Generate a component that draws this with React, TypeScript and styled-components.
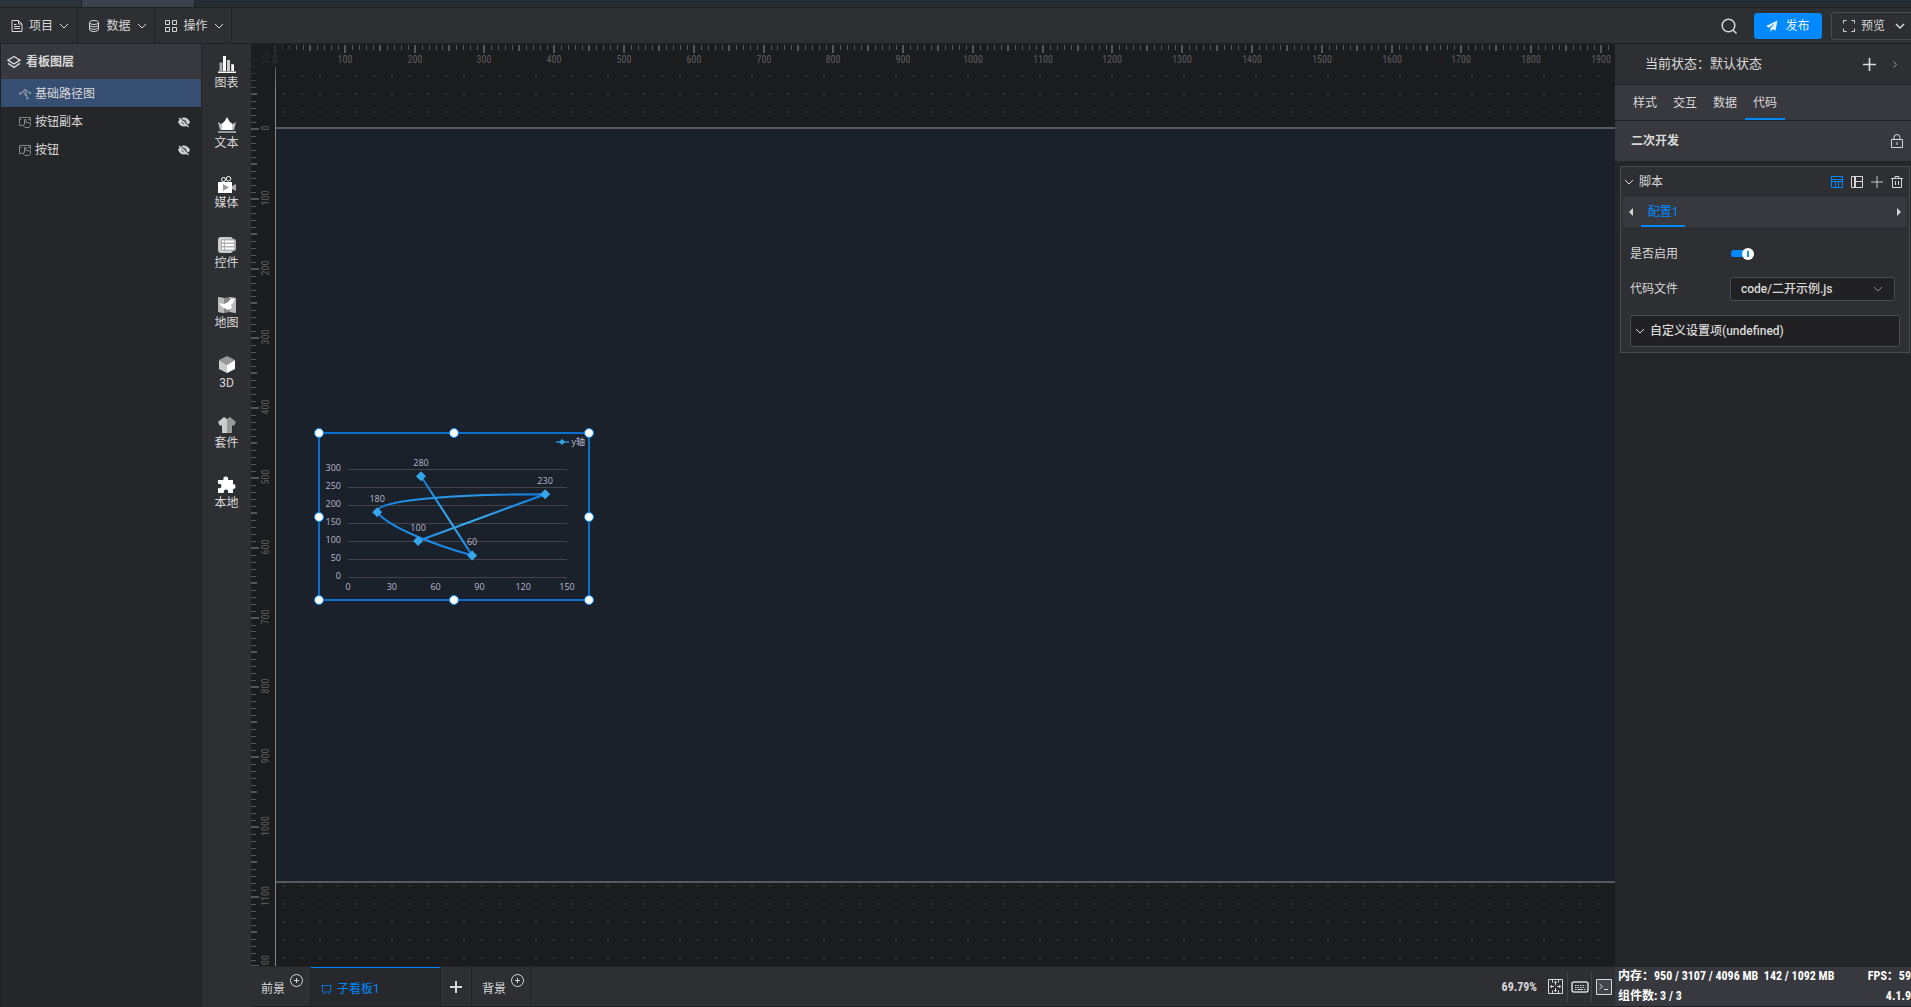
import React, { useState } from "react";
import styled, { createGlobalStyle, css } from "styled-components";

const c = {
  bar: "#2e2f33",
  raised: "#38393e",
  panel: "#252628",
  canvas: "#1b1c1d",
  board: "#1b212a",
  line: "#222326",
  outline: "#4a4b4f",
  text: "#d8d8d8",
  accent: "#0088ff",
};
const narrow = `"Roboto Condensed", "Liberation Sans Narrow", Roboto, "Noto Sans CJK SC", sans-serif`;

const GlobalStyle = createGlobalStyle`
  *, *::before, *::after { box-sizing: border-box; }
  body {
    margin: 0;
    background: ${c.panel};
    color: ${c.text};
    font: 12px/16px Roboto, "Noto Sans CJK SC", sans-serif;
    overflow: hidden;
  }
  button, select, input { font: inherit; color: inherit; margin: 0; }
  button { background: none; border: 0; padding: 0; cursor: pointer; }
  svg { display: block; flex: none; }
`;

/* ---------- layout ---------- */

const Page = styled.div`
  display: flex;
  flex-direction: column;
  height: 100vh;
  overflow: hidden;
`;
const WindowTabs = styled.div`
  display: flex;
  height: 8px;
  flex: none;
  background: #272d35;
  border-bottom: 1px solid #1f2124;
`;
const WindowTab = styled.div<{ $active?: boolean }>`
  width: ${(p) => (p.$active ? 113 : 82)}px;
  background: ${(p) => (p.$active ? "#3d414e" : "#2c333b")};
  border-right: 1px solid #1f2328;
`;
const Header = styled.header`
  display: flex;
  align-items: center;
  height: 36px;
  flex: none;
  background: ${c.bar};
  border-bottom: 1px solid ${c.line};
  overflow: hidden;
`;
const MenuButton = styled.button`
  display: flex;
  align-items: center;
  justify-content: center;
  gap: 6px;
  width: 77px;
  height: 100%;
  padding-left: 3px;
  border-right: 1px solid ${c.line};
  &:first-of-type { width: 78px; }
`;
const HeaderActions = styled.div`
  display: flex;
  align-items: center;
  margin-left: auto;
  margin-right: -10px;
`;
const IconButton = styled.button`
  display: flex;
  align-items: center;
  justify-content: center;
`;
const PublishButton = styled.button`
  display: flex;
  align-items: center;
  justify-content: center;
  gap: 7px;
  width: 68px;
  height: 26px;
  margin: 0 9px 0 17px;
  border-radius: 3px;
  background: ${c.accent};
  color: #e8f3ff;
`;
const PreviewButton = styled.button`
  display: flex;
  align-items: center;
  gap: 6px;
  width: 90px;
  height: 28px;
  padding-left: 11px;
  border: 1px solid ${c.outline};
  border-radius: 3px;
`;
const Chevron = styled.span`
  display: flex;
  margin-left: 4px;
`;
const Body = styled.div`
  display: flex;
  flex: 1;
  min-height: 0;
`;

/* ---------- layer panel ---------- */

const LayerPanel = styled.aside`
  width: 202px;
  flex: none;
  background: ${c.panel};
  border-left: 1px solid #1f2022;
  border-right: 1px solid ${c.line};
`;
const LayerTitle = styled.h2`
  display: flex;
  align-items: center;
  gap: 5px;
  height: 35px;
  margin: 0;
  padding-left: 6px;
  background: ${c.raised};
  font-size: 12px;
  font-weight: 700;
`;
const LayerList = styled.ul`
  margin: 0;
  padding: 0;
  list-style: none;
`;
const LayerRow = styled.li<{ $selected?: boolean }>`
  display: flex;
  align-items: center;
  gap: 4px;
  height: 28px;
  padding: 2px 11px 0 18px;
  background: ${(p) => (p.$selected ? "#374e73" : "transparent")};
`;
const LayerName = styled.span`
  flex: 1;
`;

/* ---------- component strip ---------- */

const Strip = styled.nav`
  display: flex;
  flex-direction: column;
  width: 49px;
  flex: none;
  padding-top: 12px;
  background: ${c.bar};
`;
const StripButton = styled.button`
  display: flex;
  flex-direction: column;
  align-items: center;
  gap: 1px;
  height: 60px;
`;

/* ---------- stage ---------- */

const Center = styled.main`
  display: flex;
  flex-direction: column;
  flex: 1;
  min-width: 0;
`;
const Stage = styled.div`
  position: relative;
  display: grid;
  grid-template: 23px 1fr / 24px 1fr;
  flex: 1;
  min-height: 0;
  background: ${c.canvas};
  overflow: hidden;
`;
const RulerBox = styled.div`
  min-width: 0;
  min-height: 0;
  overflow: hidden;
`;
const TopRulerBox = styled(RulerBox)`
  grid-area: 1 / 1 / 2 / 3;
`;
const SideRulerBox = styled(RulerBox)`
  grid-area: 1 / 1 / 3 / 2;
`;
const CornerFade = styled.div`
  position: absolute;
  left: 0;
  top: 0;
  width: 56px;
  height: 56px;
  background: radial-gradient(circle at 0 0, ${c.canvas} 12px, transparent 52px);
  pointer-events: none;
`;
const Canvas = styled.div`
  grid-area: 2 / 2 / 3 / 3;
  position: relative;
  min-width: 0;
  overflow: hidden;
  border-left: 1px solid #858585;
  background: conic-gradient(at 2px 2px, transparent 75%, #333436 0) 7px 8px / 18px 18px;
`;
const Board = styled.div`
  position: absolute;
  left: 0;
  top: 60px;
  width: 1340px;
  height: 756px;
  background: ${c.board};
  border: 2px solid #58595c;
  border-width: 2px 0;
`;
const Selection = styled.div`
  position: absolute;
  left: 43px;
  top: 366px;
  width: 270px;
  height: 167px;
  box-shadow: 0 0 0 1px #0a70cc, inset 0 0 0 1px #0a70cc;
`;
const Handle = styled.span<{ $x: number; $y: number }>`
  position: absolute;
  left: ${(p) => p.$x}%;
  top: ${(p) => p.$y}%;
  width: 10px;
  height: 10px;
  margin: -5px;
  border: 1px solid ${c.accent};
  border-radius: 50%;
  background: #fff;
`;

/* ---------- bottom bar ---------- */

const BottomBar = styled.footer`
  display: flex;
  height: 41px;
  flex: none;
  background: ${c.bar};
  border-top: 1px solid ${c.line};
  border-bottom: 1px solid ${c.line};
`;
const BoardTab = styled.button<{ $w: number; $active?: boolean }>`
  display: flex;
  align-items: center;
  gap: 5px;
  width: ${(p) => p.$w}px;
  padding: 4px 0 0 10px;
  border-right: 1px solid ${c.line};
  ${(p) =>
    p.$active &&
    css`
      background: #27282c;
      border-top: 1px solid ${c.accent};
      color: ${c.accent};
    `}
`;
const LayerTab = styled(BoardTab)`
  svg { align-self: flex-start; margin-top: 3px; }
`;
const AddTab = styled(IconButton)`
  width: 31px;
  border-right: 1px solid ${c.line};
`;
const ZoomTools = styled.div`
  display: flex;
  align-items: center;
  margin-left: auto;
`;
const ZoomValue = styled.span`
  margin-right: 6px;
  font-family: ${narrow};
  font-weight: 700;
`;
const ToolCell = styled(IconButton)<{ $first?: boolean }>`
  width: 24px;
  height: 30px;
  border-left: ${(p) => (p.$first ? "0" : "1px solid #424347")};
`;

/* ---------- properties panel ---------- */

const Side = styled.aside`
  display: flex;
  flex-direction: column;
  width: 296px;
  flex: none;
  background: ${c.panel};
  overflow: hidden;
`;
const StateRow = styled.div`
  display: flex;
  align-items: center;
  height: 41px;
  padding: 0 14px 0 30px;
  background: ${c.bar};
  border-bottom: 1px solid ${c.line};
  font-size: 13px;
`;
const StateLabel = styled.span`
  flex: 1;
`;
const StateTools = styled.div`
  display: flex;
  align-items: center;
  gap: 17px;
`;
const Tabs = styled.div`
  display: flex;
  height: 36px;
  padding-left: 10px;
  background: ${c.raised};
  border-bottom: 1px solid ${c.line};
`;
const Tab = styled.button<{ $active?: boolean }>`
  width: 40px;
  border-top: 2px solid transparent;
  border-bottom: 2px solid ${(p) => (p.$active ? c.accent : "transparent")};
`;
const SectionTitle = styled.div`
  display: flex;
  align-items: center;
  justify-content: space-between;
  height: 40px;
  padding: 0 8px 0 16px;
  background: ${c.raised};
  font-weight: 700;
`;
const Group = styled.section`
  margin: 5px 1px 0 5px;
  padding: 0 2px 5px;
  border: 1px solid ${c.outline};
  background: ${c.bar};
`;
const GroupHead = styled.div`
  display: flex;
  align-items: center;
  height: 30px;
  padding: 0 4px 0 1px;
`;
const GroupName = styled.button`
  display: flex;
  align-items: center;
  gap: 5px;
  margin-right: auto;
`;
const GroupTools = styled.div`
  display: flex;
  align-items: center;
  gap: 8px;
`;
const ConfigTabs = styled.div`
  display: flex;
  align-items: stretch;
  height: 30px;
  padding: 0 6px;
  background: ${c.raised};
`;
const ConfigTab = styled.button`
  width: 44px;
  margin: 0 auto 0 8px;
  border-top: 2px solid transparent;
  border-bottom: 2px solid ${c.accent};
  color: ${c.accent};
`;
const Fields = styled.div`
  padding: 9px 0;
`;
const Field = styled.div`
  display: flex;
  align-items: center;
  height: 35px;
  padding-left: 7px;
`;
const FieldLabel = styled.label`
  width: 100px;
`;
const Switch = styled.input`
  appearance: none;
  position: relative;
  width: 23px;
  height: 12px;
  margin-left: 1px;
  background: linear-gradient(${c.accent}, ${c.accent}) 0 50% / 20px 7px no-repeat;
  border-radius: 6px;
  &::before {
    content: "";
    position: absolute;
    right: 0;
    top: 0;
    width: 12px;
    height: 12px;
    border-radius: 50%;
    background: linear-gradient(#1a90e8, #1a90e8) 50% 50% / 2px 6px no-repeat #fff;
  }
  &:not(:checked)::before { right: 11px; }
`;
const SelectWrap = styled.div`
  position: relative;
  width: 165px;
  svg { position: absolute; right: 12px; top: 9px; pointer-events: none; }
`;
const Select = styled.select`
  appearance: none;
  display: block;
  width: 100%;
  height: 24px;
  padding: 0 24px 0 10px;
  border: 1px solid ${c.outline};
  border-radius: 2px;
  background: #212123;
  font-weight: 500;
`;
const Collapse = styled.button`
  display: flex;
  align-items: center;
  gap: 5px;
  width: 270px;
  height: 32px;
  margin-left: 7px;
  padding-left: 4px;
  border: 1px solid ${c.outline};
  border-radius: 2px;
  background: #212123;
  font-weight: 500;
`;
const Status = styled.div`
  display: flex;
  flex-direction: column;
  justify-content: space-between;
  height: 41px;
  margin-top: auto;
  padding: 0 0 0 3px;
  background: ${c.raised};
  border-top: 1px solid ${c.line};
  border-bottom: 1px solid ${c.line};
  color: #fff;
  font-family: ${narrow};
  font-weight: 700;
  white-space: pre;
`;
const StatusLine = styled.div`
  display: flex;
  justify-content: space-between;
  line-height: 19px;
`;

/* ---------- icons ---------- */

type IconProps = {
  size?: number;
  h?: number;
  box?: string;
  color?: string;
  w?: number;
  children: React.ReactNode;
};
const Icon = ({ size = 12, h, box, color = "currentColor", w = 1, children }: IconProps) => (
  <svg
    width={size}
    height={h ?? size}
    viewBox={box ?? `0 0 ${size} ${h ?? size}`}
    fill="none"
    stroke={color}
    strokeWidth={w}
    aria-hidden
  >
    {children}
  </svg>
);
const Down = ({ color, w = 1 }: { color?: string; w?: number }) => (
  <Icon size={10} h={6} color={color} w={w}><path d="M1 1l4 4 4-4" /></Icon>
);
const DocIcon = () => (
  <Icon><path d="M1 .5h6.500l3.500 3.500v7.500H1zM7.500 .5V4H11M3 4.500h2.500M3 6.500h6M3 8.500h6" /></Icon>
);
const DataIcon = () => (
  <Icon>
    <ellipse cx="6" cy="2.500" rx="4.500" ry="2" />
    <path d="M1.500 2.500v7c0 1.100 2 2 4.500 2s4.500-.9 4.500-2v-7M1.500 5c0 1 2 1.800 4.500 1.800S10.500 6 10.500 5M1.500 7.500c0 1 2 1.800 4.500 1.800s4.500-.8 4.500-1.800" />
  </Icon>
);
const GridIcon = () => (
  <Icon><path d="M.5 .5h4v4h-4zM7.500 .5h4v4h-4zM.5 7.500h4v4h-4zM7.500 7.500h4v4h-4z" /></Icon>
);
const LayersIcon = () => (
  <Icon size={14} w={1.4}><path d="M7 1.500l6 3.700-6 3.800-6-3.800zM1 8.300l6 4 6-4" /></Icon>
);
const PathIcon = () => (
  <Icon color="#9aa3b1">
    <path d="M.5 6L6 1.500 11 5M6 1.500L8.500 11M2 5.500v1M4 3.500l3 4.500" />
    <path d="M0 5.500h2M10 5h2M7.500 10.500h2" strokeWidth="1.500" />
  </Icon>
);
const TapIcon = () => (
  <Icon color="#85878b">
    <path d="M3 9.500H.5v-8h11v4M.5 3.500h2M9 3.500h2.500M5.500 8.500v-5h1.500v3l4.500 .5v2.500l-1.500 2H6l-2.500-2.500z" />
  </Icon>
);
const EyeOff = () => (
  <Icon color="none">
    <path d="M0 6c1.500-3 3.500-4.500 6-4.500S10.500 3 12 6c-1.500 3-3.500 4.500-6 4.500S1.500 9 0 6z" fill="#d4d4d4" />
    <circle cx="6" cy="6" r="2" stroke="#4a4b4e" />
    <path d="M2 1.500l9 8.500" stroke="#252628" /><path d="M1 2l9.500 9" stroke="#d4d4d4" strokeWidth="1.200" />
  </Icon>
);
const SearchIcon = () => (
  <Icon size={16} w={1.500}><circle cx="7.500" cy="7.500" r="6.300" /><path d="M12 12l3.500 3.500" /></Icon>
);
const PlaneIcon = () => (
  <Icon color="none"><path d="M11.500 .5L0 6l3 1.500L9 3 4.500 8.300V12l2-2.700 3 1.200z" fill="#e8f3ff" /></Icon>
);
const FrameIcon = () => (
  <Icon><path d="M.5 3.500v-3h3M8.500 .5h3v3M11.500 8.500v3h-3M3.500 11.500h-3v-3" /></Icon>
);
const PlusIcon = ({ size = 12, w = 1, color }: { size?: number; w?: number; color?: string }) => (
  <Icon size={size} box="0 0 12 12" w={w} color={color}><path d="M6 0v12M0 6h12" /></Icon>
);
const LockIcon = () => (
  <Icon size={12} h={14}><path d="M.5 5.500h11v8H.5zM3 5.500V3.500a3 3 0 0 1 6 0v2M6 8v3" /></Icon>
);
const TableIcon = () => (
  <Icon color={c.accent}><path d="M.5 .5h11v11H.5zM.5 3.500h11M.5 5.500h11M4.500 5.500v6M7.500 5.500v6" /></Icon>
);
const LayoutIcon = () => (
  <Icon><path d="M.5 .5h11v11H.5zM4.500 .5v11M3.500 .5v11M4.500 5.500h7" /></Icon>
);
const TrashIcon = () => (
  <Icon><path d="M0 2.500h12M4 2.500v-2h4v2M1.500 2.500v9h9v-9M4.500 5v4M7.500 5v4" /></Icon>
);
const PlusCircle = () => (
  <Icon size={13}><circle cx="6.500" cy="6.500" r="6" /><path d="M6.500 4v5M4 6.500h5" /></Icon>
);
const EaselIcon = () => (
  <Icon size={11} color="#0a6fcc"><path d="M0 1.500h11M1.500 1.500v6.500h8V1.500M3.500 8.500l-1 2M7.500 8.500l1 2" /></Icon>
);
const FitIcon = () => (
  <Icon size={15}>
    <path d="M.5 .5h14v14H.5zM7.500 2v4M7.500 9v4M2 7.500h4M9 7.500h4M4.500 .5v3M10.500 .5v3M4.500 11.500v3M10.500 11.500v3" />
    <path d="M5.800 4l1.700-2 1.700 2zM5.800 11l1.700 2 1.700-2zM4 5.800l-2 1.700 2 1.700zM11 5.800l2 1.700-2 1.700z" fill="currentColor" stroke="none" />
  </Icon>
);
const KeyboardIcon = () => (
  <Icon size={18} h={12}>
    <rect x="1" y="1" width="16" height="10" rx="2" strokeWidth="1.500" />
    <path d="M4 4.500h10.500M4 6.500h10.500" strokeDasharray="1.500 1" />
    <path d="M4 8.500h1.500M6.500 8.500h5.500M13 8.500h1.500" />
  </Icon>
);
const TerminalIcon = () => (
  <Icon size={16}><path d="M.5 .5h15v15H.5z" fill="#45464b" /><path d="M3.500 5l3 2.500-3 2.500M8 10.500h4" /></Icon>
);
const Triangle = ({ right }: { right?: boolean }) => (
  <Icon size={4} h={8} color="none"><path d={right ? "M0 0l4 4-4 4z" : "M4 0L0 4l4 4z"} fill="#d4d4d4" /></Icon>
);

const art: Record<string, React.ReactNode> = {
  图表: (
    <>
      <path d="M1.500 6.500h3V15h-3z" fill="#aaa" /><path d="M9 4h3v11H9zM13 8h3v7h-3z" fill="#ccc" />
      <path d="M5 0h3v15H5zM14 9h2v6h-2zM0 15.500h18V17H0z" fill="#fff" />
    </>
  ),
  文本: (
    <>
      <path d="M0 6l5 3 1 5h6l1-5 5-3-2 8H2z" fill="#bbb" /><path d="M9 1l2.500 4.500 3 2.500-.5 6H4l-.5-6 3-2.500z" fill="#fff" />
      <path d="M0 15h18v2H0z" fill="#999" />
    </>
  ),
  媒体: (
    <>
      <circle cx="5.500" cy="3.500" r="2" stroke="#fff" /><circle cx="10.500" cy="2.800" r="2.300" stroke="#fff" />
      <path d="M0 6h14v11H0z" fill="#fff" /><path d="M14 10l4-2v7l-4-2z" fill="#aaa" /><path d="M5 8l6 3.500L5 15z" fill="#999" />
    </>
  ),
  控件: (
    <>
      <rect y="1" width="15" height="16" rx="3" fill="#ccc" /><rect x="3" y="3" width="15" height="12" rx="2" fill="#b2b2b2" />
      <path d="M4 4.500h2v2H4zM7 4.500h9v2H7zM4 8h2v2H4zM7 8h9v2H7zM4 11.500h2v2H4zM7 11.500h9v2H7z" fill="#fff" />
    </>
  ),
  地图: (
    <>
      <path d="M0 1l6 1 6-1 6 1v15l-6-1-6 1-6-1z" fill="#888" /><path d="M0 1l6 1v15l-6-1zM12 1l6 1v15l-6-1z" fill="#bbb" />
      <path d="M1 7l5 1 4-2 3-3h3.500l-1.500 4-2 2 1 3-4 2-4-2-3-2z" fill="#fff" />
    </>
  ),
  "3D": (
    <>
      <path d="M9 0l8 4-8 5-8-5z" fill="#999" /><path d="M1 4l8 5v8l-8-4z" fill="#ccc" /><path d="M17 4L9 9v8l8-4z" fill="#fff" />
    </>
  ),
  套件: (
    <>
      <path d="M6 1L0 6l2 4 2-1v8h5V3z" fill="#ccc" /><path d="M12 1l6 5-2 4-2-1v8H9V3z" fill="#999" />
    </>
  ),
  本地: (
    <path d="M0 4h5.500a2.500 2.500 0 1 1 4.500 0h5v4a2.500 2.500 0 1 1 0 5v4h-5a2.300 2.300 0 1 0-4 0H0v-5a2.300 2.300 0 1 0 0-4z" fill="#fff" />
  ),
};

/* ---------- rulers ---------- */

const ZOOM = 0.6979;

const TickLabel = styled.text`
  fill: #5e5e60;
  font-family: ${narrow};
  font-size: 10px;
  text-anchor: middle;
`;

type RulerProps = { vertical?: boolean; origin: number; from: number; to: number };

function Ruler({ vertical, origin, from, to }: RulerProps) {
  const length = Math.round(origin + to * ZOOM) + 20;
  const steps = Array.from({ length: (to - from) / 10 + 1 }, (_, i) => from / 10 + i);
  return (
    <svg width={vertical ? 24 : length} height={vertical ? length : 24} aria-hidden>
      {steps.map((n) => {
        const p = Math.round(origin + n * 10 * ZOOM);
        const major = n % 10 === 0;
        const half = n % 5 === 0;
        const len = major ? 8 : half ? 6 : 5;
        const thick = half ? 2 : 1;
        const start = half ? p - 1 : p;
        return (
          <React.Fragment key={n}>
            {vertical ? (
              <rect x={0} y={start} width={len} height={thick} fill="#565658" />
            ) : (
              <rect x={start} y={1} width={thick} height={len} fill="#565658" />
            )}
            {major &&
              (vertical ? (
                <TickLabel transform={`translate(18 ${p - 1}) rotate(-90)`}>{n * 10}</TickLabel>
              ) : (
                <TickLabel x={p} y={19}>{n * 10}</TickLabel>
              ))}
          </React.Fragment>
        );
      })}
    </svg>
  );
}

/* ---------- path chart ---------- */

const ChartText = styled.text<{ $anchor?: string }>`
  fill: #b9b8ce;
  font-family: "Open Sans", "Noto Sans CJK SC", sans-serif;
  font-size: 9px;
  text-anchor: ${(p) => p.$anchor ?? "middle"};
`;
const points = [[50, 280], [85, 60], [20, 180], [135, 230], [48, 100]];
const px = (v: number) => 29 + (v * 219) / 150;
const py = (v: number) => 144 - (v * 108) / 300;

const Diamond = ({ x, y, r }: { x: number; y: number; r: number }) => (
  <path d={`M${x} ${y - r}l${r} ${r}l${-r} ${r}l${-r} ${-r}z`} fill="#35a5ec" />
);

function PathChart() {
  return (
    <svg width="270" height="167" role="img" aria-label="基础路径图">
      <defs>
        <radialGradient id="trace">
          <stop offset="0" stopColor="#41b3f0" />
          <stop offset="1" stopColor="#1280e2" />
        </radialGradient>
      </defs>
      {[0, 50, 100, 150, 200, 250, 300].map((v) => (
        <React.Fragment key={v}>
          <path d={`M29 ${Math.round(py(v)) + 0.5}h219`} stroke="#43424d" />
          <ChartText x={22} y={py(v) + 2} $anchor="end">{v}</ChartText>
        </React.Fragment>
      ))}
      {[0, 30, 60, 90, 120, 150].map((v) => (
        <ChartText key={v} x={px(v)} y={157}>{v}</ChartText>
      ))}
      <path
        d={`M${px(50)} ${py(280)}L${px(85)} ${py(60)}C${px(62)} ${py(86)} ${px(28)} ${py(136)} ${px(20)} ${py(180)}C${px(18)} ${py(213)} ${px(70)} ${py(230)} ${px(135)} ${py(230)}L${px(48)} ${py(100)}`}
        fill="none"
        stroke="url(#trace)"
        strokeWidth="2"
      />
      {points.map(([x, y]) => (
        <React.Fragment key={x}>
          <Diamond x={px(x)} y={py(y)} r={5} />
          <ChartText x={px(x)} y={py(y) - 10}>{y}</ChartText>
        </React.Fragment>
      ))}
      <path d="M237 9h13" stroke="#2a97e8" strokeWidth="1.400" />
      <Diamond x={243} y={9} r={3} />
      <ChartText x={266} y={12} $anchor="end">y轴</ChartText>
    </svg>
  );
}

const handles = [[0, 0], [50, 0], [100, 0], [0, 50], [100, 50], [0, 100], [50, 100], [100, 100]];

export default function App() {
  const [tab, setTab] = useState("代码");
  const [enabled, setEnabled] = useState(true);

  return (
    <>
      <GlobalStyle />
      <Page>
        <WindowTabs><WindowTab /><WindowTab $active /></WindowTabs>
        <Header>
          <MenuButton><DocIcon />项目<Down /></MenuButton>
          <MenuButton><DataIcon />数据<Down /></MenuButton>
          <MenuButton><GridIcon />操作<Down /></MenuButton>
          <HeaderActions>
            <IconButton aria-label="搜索"><SearchIcon /></IconButton>
            <PublishButton><PlaneIcon />发布</PublishButton>
            <PreviewButton><FrameIcon />预览<Chevron><Down w={1.500} /></Chevron></PreviewButton>
          </HeaderActions>
        </Header>
        <Body>
          <LayerPanel>
            <LayerTitle><LayersIcon />看板图层</LayerTitle>
            <LayerList>
              <LayerRow $selected><PathIcon /><LayerName>基础路径图</LayerName></LayerRow>
              <LayerRow><TapIcon /><LayerName>按钮副本</LayerName><EyeOff /></LayerRow>
              <LayerRow><TapIcon /><LayerName>按钮</LayerName><EyeOff /></LayerRow>
            </LayerList>
          </LayerPanel>
          <Strip>
            {["图表", "文本", "媒体", "控件", "地图", "3D", "套件", "本地"].map((name) => (
              <StripButton key={name}>
                <Icon size={18} color="none">{art[name]}</Icon>
                {name}
              </StripButton>
            ))}
          </Strip>
          <Center>
            <Stage>
              <TopRulerBox><Ruler origin={24} from={0} to={1910} /></TopRulerBox>
              <SideRulerBox><Ruler vertical origin={85} from={-100} to={1200} /></SideRulerBox>
              <Canvas>
                <Board />
                <Selection>
                  <PathChart />
                  {handles.map(([x, y]) => <Handle key={`${x}-${y}`} $x={x} $y={y} />)}
                </Selection>
              </Canvas>
              <CornerFade />
            </Stage>
            <BottomBar>
              <LayerTab $w={60}>前景<PlusCircle /></LayerTab>
              <BoardTab $w={130} $active><EaselIcon />子看板1</BoardTab>
              <AddTab aria-label="添加子看板"><PlusIcon w={2} /></AddTab>
              <LayerTab $w={59}>背景<PlusCircle /></LayerTab>
              <ZoomTools>
                <ZoomValue>69.79%</ZoomValue>
                <ToolCell $first aria-label="适应画布"><FitIcon /></ToolCell>
                <ToolCell aria-label="快捷键"><KeyboardIcon /></ToolCell>
                <ToolCell aria-label="控制台"><TerminalIcon /></ToolCell>
              </ZoomTools>
            </BottomBar>
          </Center>
          <Side>
            <StateRow>
              <StateLabel>当前状态：默认状态</StateLabel>
              <StateTools>
                <IconButton aria-label="添加状态"><PlusIcon size={13} w={1.500} /></IconButton>
                <IconButton aria-label="展开状态">
                  <Icon size={4} h={7} color="#9a9a9a"><path d="M.5 .5l3 3-3 3" /></Icon>
                </IconButton>
              </StateTools>
            </StateRow>
            <Tabs>
              {["样式", "交互", "数据", "代码"].map((t) => (
                <Tab key={t} $active={t === tab} onClick={() => setTab(t)}>{t}</Tab>
              ))}
            </Tabs>
            <SectionTitle>
              二次开发
              <IconButton aria-label="锁定"><LockIcon /></IconButton>
            </SectionTitle>
            <Group>
              <GroupHead>
                <GroupName><Down />脚本</GroupName>
                <GroupTools>
                  <IconButton aria-label="表格视图"><TableIcon /></IconButton>
                  <IconButton aria-label="分栏视图"><LayoutIcon /></IconButton>
                  <IconButton aria-label="新增脚本"><PlusIcon color="#c8c8c8" /></IconButton>
                  <IconButton aria-label="删除脚本"><TrashIcon /></IconButton>
                </GroupTools>
              </GroupHead>
              <ConfigTabs>
                <IconButton aria-label="上一个"><Triangle /></IconButton>
                <ConfigTab>配置1</ConfigTab>
                <IconButton aria-label="下一个"><Triangle right /></IconButton>
              </ConfigTabs>
              <Fields>
                <Field>
                  <FieldLabel htmlFor="enabled">是否启用</FieldLabel>
                  <Switch id="enabled" type="checkbox" checked={enabled} onChange={(e) => setEnabled(e.target.checked)} />
                </Field>
                <Field>
                  <FieldLabel htmlFor="file">代码文件</FieldLabel>
                  <SelectWrap>
                    <Select id="file"><option>code/二开示例.js</option></Select>
                    <Down color="#8a8a8a" />
                  </SelectWrap>
                </Field>
              </Fields>
              <Collapse><Down />自定义设置项(undefined)</Collapse>
            </Group>
            <Status>
              <StatusLine><span>内存：950 / 3107 / 4096 MB  142 / 1092 MB</span><span>FPS：59</span></StatusLine>
              <StatusLine><span>组件数: 3 / 3</span><span>4.1.9</span></StatusLine>
            </Status>
          </Side>
        </Body>
      </Page>
    </>
  );
}
